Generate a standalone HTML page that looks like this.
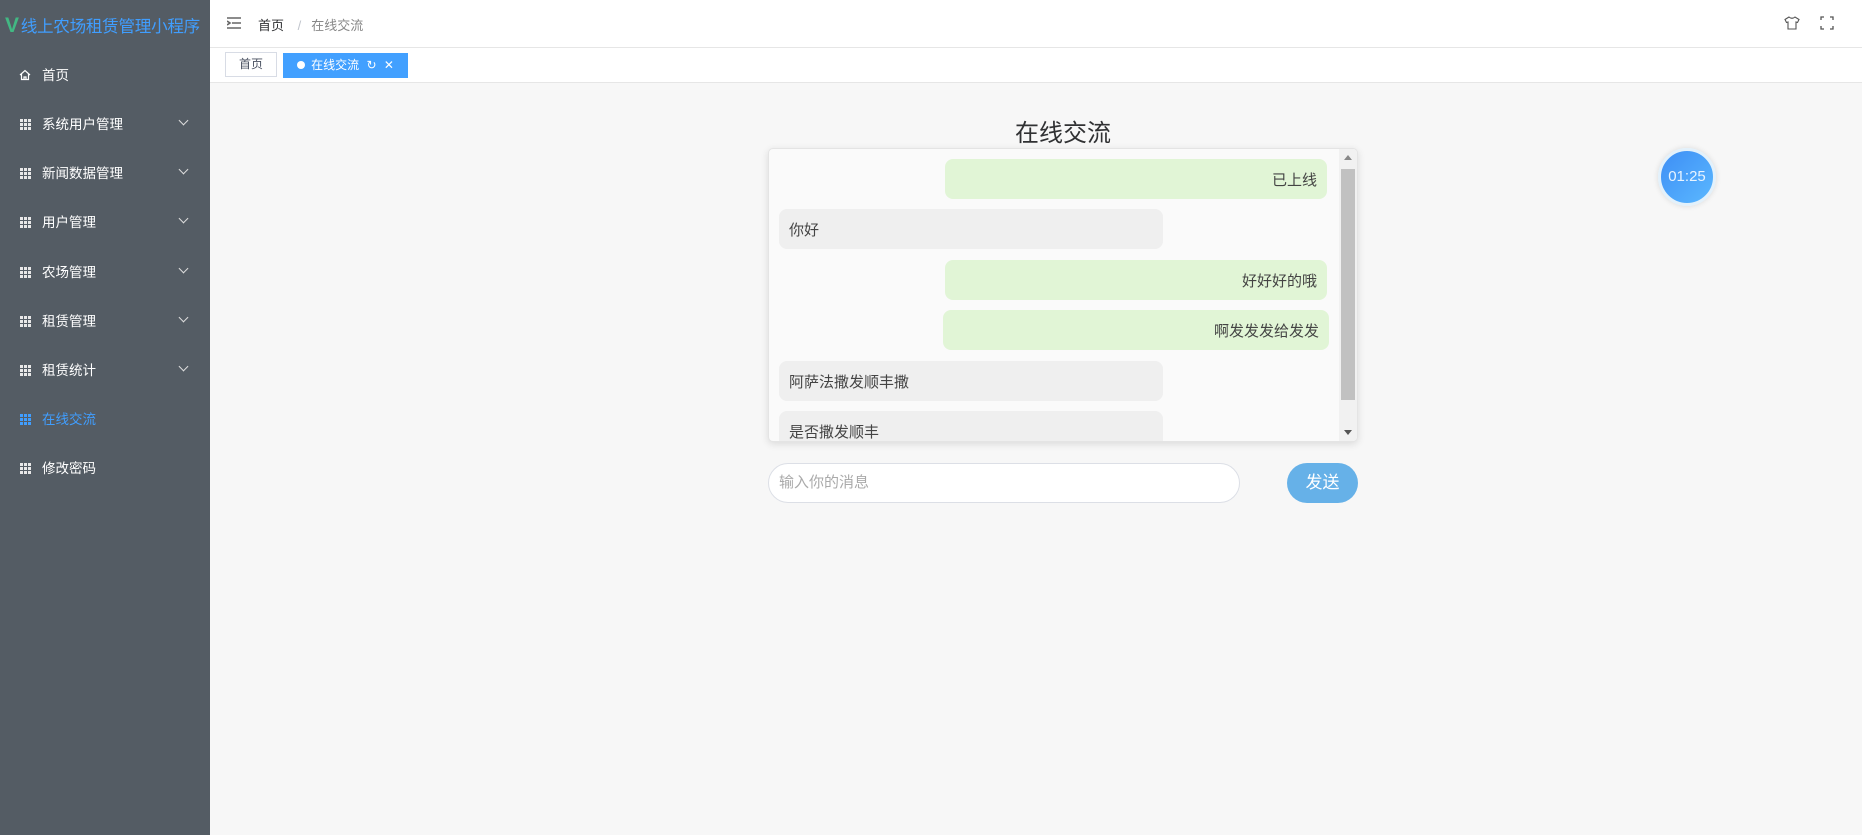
<!DOCTYPE html>
<html><head><meta charset="utf-8"><style>
*{margin:0;padding:0;box-sizing:border-box}
body{width:1862px;height:835px;overflow:hidden;background:#f7f7f7;font-family:"Liberation Sans","Noto Sans CJK SC",sans-serif;position:relative}
.side{position:absolute;left:0;top:0;width:210px;height:835px;background:#545c64;overflow:hidden}
.logo{position:absolute;left:5px;top:13px;color:#409eff;font-size:16.6px;white-space:nowrap;letter-spacing:-0.3px}
.logo b{color:#42b883;font-size:21px;font-weight:bold;margin-right:2px}
.mi{position:absolute;left:0;width:210px;height:49px;line-height:49px;color:#fff;font-size:13.5px}
.mi .ic{position:absolute;left:20px;top:19px;width:11px;height:11px;background:
linear-gradient(90deg,transparent 3px,#545c64 3px,#545c64 4px,transparent 4px,transparent 7px,#545c64 7px,#545c64 8px,transparent 8px),
linear-gradient(0deg,transparent 3px,#545c64 3px,#545c64 4px,transparent 4px,transparent 7px,#545c64 7px,#545c64 8px,transparent 8px),#e8e8e8}
.mi span{position:absolute;left:42px}
.mi .ar{position:absolute;left:180px;top:17px;width:7px;height:7px;border-right:1.3px solid #ddd;border-bottom:1.3px solid #ddd;transform:rotate(45deg)}
.mi.act{color:#409eff}.mi.act .ic{background-color:#409eff}
.hdr{position:absolute;left:210px;top:0;right:0;height:48px;background:#fff;border-bottom:1px solid #e6e6e6}
.tags{position:absolute;left:210px;top:48px;right:0;height:35px;background:#fff;border-bottom:1px solid #e6e6e6}
.tag{position:absolute;height:25px;line-height:23px;font-size:12px;text-align:center}
.title{position:absolute;left:768px;width:590px;top:113px;text-align:center;font-size:24px;color:#303133}
.box{position:absolute;left:768px;top:148px;width:590px;height:294px;background:#fafafa;border:1px solid #e4e4e4;border-radius:5px;box-shadow:0 2px 8px rgba(0,0,0,.12);overflow:hidden}
.b{position:absolute;height:40px;line-height:44px;border-radius:8px;font-size:15px;color:#444;padding:0 10px}
.g{background:#e1f5d6;text-align:right}.y{background:#efefef}
.sb{position:absolute;right:0;top:0;width:18px;height:100%;background:#f1f1f1}
.th{position:absolute;left:2px;top:20px;width:14px;height:231px;background:#c1c1c1}
.inp{position:absolute;left:768px;top:463px;width:472px;height:40px;border:1px solid #dcdfe6;border-radius:20px;background:#fff;font-size:15px;color:#aaa;line-height:38px;padding-left:10px}
.btn{position:absolute;left:1287px;top:463px;width:71px;height:40px;border-radius:20px;background:#66b1e8;color:#fff;font-size:17px;text-align:center;line-height:40px}
.timer{position:absolute;left:1658px;top:148px;width:58px;height:58px;border-radius:50%;background:linear-gradient(135deg,#3d8ef5,#5bb8ff);border:3px solid #e3f1fb;box-shadow:0 0 6px rgba(0,0,0,.12);color:#e8f4ff;font-size:15px;text-align:center;line-height:52px}
</style></head><body>
<div class="side">
<div class="logo"><b>V</b>线上农场租赁管理小程序</div>
<div class="mi" style="top:51px"><svg style="position:absolute;left:19px;top:18px" width="12" height="12" viewBox="0 0 12 12"><path d="M1 6L6 1.5 11 6M2.5 5v5.5h7V5M5 10.5V8h2v2.5" fill="none" stroke="#fff" stroke-width="1.2"/></svg><span>首页</span></div>
<div class="mi" style="top:100px"><i class="ic"></i><span>系统用户管理</span><i class="ar"></i></div>
<div class="mi" style="top:149px"><i class="ic"></i><span>新闻数据管理</span><i class="ar"></i></div>
<div class="mi" style="top:198px"><i class="ic"></i><span>用户管理</span><i class="ar"></i></div>
<div class="mi" style="top:248px"><i class="ic"></i><span>农场管理</span><i class="ar"></i></div>
<div class="mi" style="top:297px"><i class="ic"></i><span>租赁管理</span><i class="ar"></i></div>
<div class="mi" style="top:346px"><i class="ic"></i><span>租赁统计</span><i class="ar"></i></div>
<div class="mi act" style="top:395px"><i class="ic"></i><span>在线交流</span></div>
<div class="mi" style="top:444px"><i class="ic"></i><span>修改密码</span></div>
</div>
<div class="hdr">
<svg style="position:absolute;left:17px;top:17px" width="14" height="12" viewBox="0 0 14 12"><path d="M0 1h14M5 6h9M0 11h14M0 4l3 2-3 2" fill="none" stroke="#666" stroke-width="1.6"/></svg>
<div style="position:absolute;left:48px;top:15px;font-size:13px;color:#303133">首页 <span style="color:#c0c4cc;margin:0 10px">/</span><span style="color:#888">在线交流</span></div>
<svg style="position:absolute;left:1574px;top:16px" width="16" height="14" viewBox="0 0 16 14"><path d="M5 1L1 3.5 2.5 6.5 4 6V13H12V6L13.5 6.5 15 3.5 11 1Q8 3.5 5 1Z" fill="none" stroke="#555" stroke-width="1.1"/></svg>
<svg style="position:absolute;left:1610px;top:16px" width="14" height="14" viewBox="0 0 14 14"><path d="M1 4V1h3M10 1h3v3M13 10v3h-3M4 13H1v-3" fill="none" stroke="#555" stroke-width="1.3"/></svg>
</div>
<div class="tags">
<div class="tag" style="left:15px;top:4px;width:52px;border:1px solid #d8dce5;color:#495060;background:#fff">首页</div>
<div class="tag" style="left:73px;top:5px;width:125px;background:#42a0ff;color:#fff;line-height:25px"><span style="display:inline-block;width:8px;height:8px;border-radius:50%;background:#fff;margin-right:6px;vertical-align:0px"></span>在线交流 <span style="margin-left:4px">↻</span> <span style="margin-left:4px">✕</span></div>
</div>
<div class="title">在线交流</div>
<div class="box">
<div class="b g" style="left:176px;top:10px;width:382px">已上线</div>
<div class="b y" style="left:10px;top:60px;width:384px">你好</div>
<div class="b g" style="left:176px;top:111px;width:382px">好好好的哦</div>
<div class="b g" style="left:174px;top:161px;width:386px">啊发发发给发发</div>
<div class="b y" style="left:10px;top:212px;width:384px">阿萨法撒发顺丰撒</div>
<div class="b y" style="left:10px;top:262px;width:384px">是否撒发顺丰</div>
<div class="sb"><div style="position:absolute;left:5px;top:6px;border:4px solid transparent;border-bottom:5px solid #888;border-top:0"></div><div class="th"></div><div style="position:absolute;left:5px;bottom:6px;border:4px solid transparent;border-top:5px solid #555;border-bottom:0"></div></div>
</div>
<div class="inp">输入你的消息</div>
<div class="btn">发送</div>
<div class="timer">01:25</div>
</body></html>
